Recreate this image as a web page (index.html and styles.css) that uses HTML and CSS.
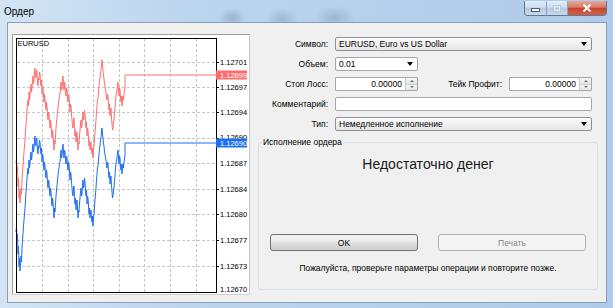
FILE: index.html
```html
<!DOCTYPE html>
<html lang="ru">
<head>
    <meta charset="UTF-8">
    <title>Ордер</title>
    <link rel="stylesheet" href="styles.css">
</head>
<body>
    <div class="window">
        <div class="titlebar">
            <span class="title">Ордер</span>
            <div class="caption-btns">
                <span class="cap cap-min"><i></i></span>
                <span class="cap cap-max"><i></i></span>
                <span class="cap cap-close">
                    <svg width="10" height="8" viewBox="0 0 10 8"><path d="M1.5 0.5 L8.5 7.5 M8.5 0.5 L1.5 7.5" stroke="#fff" stroke-width="2"/></svg>
                </span>
            </div>
        </div>

        <div class="client">
            <div class="chart">
                <svg width="236" height="259" viewBox="0 0 236 259">
                    <g class="grid">
                        <line x1="29.5" y1="4" x2="29.5" y2="257"/>
                        <line x1="55.5" y1="4" x2="55.5" y2="257"/>
                        <line x1="80.5" y1="4" x2="80.5" y2="257"/>
                        <line x1="106.5" y1="4" x2="106.5" y2="257"/>
                        <line x1="131.5" y1="4" x2="131.5" y2="257"/>
                        <line x1="157.5" y1="4" x2="157.5" y2="257"/>
                        <line x1="183.5" y1="4" x2="183.5" y2="257"/>
                        <line x1="4" y1="27.5" x2="203" y2="27.5"/>
                        <line x1="4" y1="52.5" x2="203" y2="52.5"/>
                        <line x1="4" y1="77.5" x2="203" y2="77.5"/>
                        <line x1="4" y1="103.5" x2="203" y2="103.5"/>
                        <line x1="4" y1="128.5" x2="203" y2="128.5"/>
                        <line x1="4" y1="154.5" x2="203" y2="154.5"/>
                        <line x1="4" y1="179.5" x2="203" y2="179.5"/>
                        <line x1="4" y1="205.5" x2="203" y2="205.5"/>
                        <line x1="4" y1="231.5" x2="203" y2="231.5"/>
                    </g>

                    <!-- ask (red) and bid (blue) tick lines, points in window coords -->
                    <g transform="translate(-13,-35)">
                        <polyline class="ask" points="16,164 16.5,158 17,172 17.5,166 18,186 18.5,178 19,198 19.5,190 20,203 20.5,196 21,188 21.5,194 22,180 22.5,172 23,166 23.5,158 24,152 24.5,146 25,140 25.5,132 26,124 26.5,118 27,110 27.5,104 28,100 28.5,106 29,92 29.5,100 30,96 30.5,88 31,84 31.5,92 32,88 32.5,80 33,76 33.5,84 34,80 34.5,72 35,68 35.5,76 36,78 36.5,70 37,72 37.5,82 38,86 38.5,78 39,80 39.5,72 40,74 40.5,82 41,86 41.5,80 42,94 42.5,86 43,88 43.5,96 44,102 44.5,94 45,98 45.5,106 46,110 46.5,102 47,106 47.5,114 48,120 48.5,112 49,114 49.5,122 50,128 50.5,120 51,124 51.5,132 52,138 52.5,130 53,134 53.5,142 54,150 54.5,140 55,144 55.5,136 56,128 56.5,122 57,118 57.5,112 58,108 58.5,102 59,100 59.5,96 60,94 60.5,88 61,82 61.5,90 62,88 62.5,80 63,76 63.5,84 64,90 64.5,82 65,84 65.5,92 66,96 66.5,88 67,90 67.5,98 68,102 68.5,94 69,96 69.5,104 70,112 70.5,104 71,106 71.5,114 72,120 72.5,126 73,128 73.5,120 74,118 74.5,128 75,136 75.5,130 76,142 76.5,136 77,132 77.5,140 78,150 78.5,142 79,144 79.5,136 80,130 80.5,124 81,120 81.5,128 82,126 82.5,118 83,112 83.5,120 84,118 84.5,110 85,114 85.5,122 86,128 86.5,122 87,136 87.5,128 88,130 88.5,138 89,146 89.5,140 90,150 90.5,144 91,142 91.5,150 92,154 92.5,148 93,158 93.5,150 94,146 94.5,138 95,132 95.5,126 96,120 96.5,112 97,106 97.5,100 98,98 98.5,92 99,86 99.5,80 100,78 100.5,72 101,70 101.5,64 102,60 102.5,66 103,70 103.5,76 104,78 104.5,84 105,86 105.5,90 106,92 106.5,98 107,100 107.5,94 108,96 108.5,104 109,110 109.5,104 110,116 110.5,110 111,108 111.5,118 112,124 112.5,130 113,128 113.5,122 114,120 114.5,112 115,108 115.5,100 116,96 116.5,92 117,90 117.5,84 118,82 118.5,90 119,96 119.5,88 120,90 120.5,98 121,102 121.5,96 122,106 122.5,100 123,96 123.5,100 124,94 124.5,90 125,88 125,75 216,75"/>
                    </g>
                    <g transform="translate(-13,33)">
                        <polyline class="bid" points="16,164 16.5,158 17,172 17.5,166 18,186 18.5,178 19,198 19.5,190 20,203 20.5,196 21,188 21.5,194 22,180 22.5,172 23,166 23.5,158 24,152 24.5,146 25,140 25.5,132 26,124 26.5,118 27,110 27.5,104 28,100 28.5,106 29,92 29.5,100 30,96 30.5,88 31,84 31.5,92 32,88 32.5,80 33,76 33.5,84 34,80 34.5,72 35,68 35.5,76 36,78 36.5,70 37,72 37.5,82 38,86 38.5,78 39,80 39.5,72 40,74 40.5,82 41,86 41.5,80 42,94 42.5,86 43,88 43.5,96 44,102 44.5,94 45,98 45.5,106 46,110 46.5,102 47,106 47.5,114 48,120 48.5,112 49,114 49.5,122 50,128 50.5,120 51,124 51.5,132 52,138 52.5,130 53,134 53.5,142 54,150 54.5,140 55,144 55.5,136 56,128 56.5,122 57,118 57.5,112 58,108 58.5,102 59,100 59.5,96 60,94 60.5,88 61,82 61.5,90 62,88 62.5,80 63,76 63.5,84 64,90 64.5,82 65,84 65.5,92 66,96 66.5,88 67,90 67.5,98 68,102 68.5,94 69,96 69.5,104 70,112 70.5,104 71,106 71.5,114 72,120 72.5,126 73,128 73.5,120 74,118 74.5,128 75,136 75.5,130 76,142 76.5,136 77,132 77.5,140 78,150 78.5,142 79,144 79.5,136 80,130 80.5,124 81,120 81.5,128 82,126 82.5,118 83,112 83.5,120 84,118 84.5,110 85,114 85.5,122 86,128 86.5,122 87,136 87.5,128 88,130 88.5,138 89,146 89.5,140 90,150 90.5,144 91,142 91.5,150 92,154 92.5,148 93,158 93.5,150 94,146 94.5,138 95,132 95.5,126 96,120 96.5,112 97,106 97.5,100 98,98 98.5,92 99,86 99.5,80 100,78 100.5,72 101,70 101.5,64 102,60 102.5,66 103,70 103.5,76 104,78 104.5,84 105,86 105.5,90 106,92 106.5,98 107,100 107.5,94 108,96 108.5,104 109,110 109.5,104 110,116 110.5,110 111,108 111.5,118 112,124 112.5,130 113,128 113.5,122 114,120 114.5,112 115,108 115.5,100 116,96 116.5,92 117,90 117.5,84 118,82 118.5,90 119,96 119.5,88 120,90 120.5,98 121,102 121.5,96 122,106 122.5,100 123,96 123.5,100 124,94 124.5,90 125,88 125,75 216,75"/>
                    </g>

                    <rect class="plot" x="3.5" y="3.5" width="200" height="254"/>

                    <g class="ticks">
                        <line x1="203" y1="27.5" x2="206" y2="27.5"/>
                        <line x1="203" y1="52.5" x2="206" y2="52.5"/>
                        <line x1="203" y1="77.5" x2="206" y2="77.5"/>
                        <line x1="203" y1="103.5" x2="206" y2="103.5"/>
                        <line x1="203" y1="154.5" x2="206" y2="154.5"/>
                        <line x1="203" y1="179.5" x2="206" y2="179.5"/>
                        <line x1="203" y1="205.5" x2="206" y2="205.5"/>
                        <line x1="203" y1="231.5" x2="206" y2="231.5"/>
                    </g>

                    <g class="prices">
                        <text x="207" y="30">1.12701</text>
                        <text x="207" y="55">1.12697</text>
                        <text x="207" y="80">1.12694</text>
                        <text x="207" y="105">1.12690</text>
                        <text x="207" y="131">1.12687</text>
                        <text x="207" y="157">1.12684</text>
                        <text x="207" y="182">1.12680</text>
                        <text x="207" y="208">1.12677</text>
                        <text x="207" y="234">1.12673</text>
                        <text x="207" y="257">1.12670</text>
                    </g>

                    <rect class="ask-box" x="203" y="35.5" width="31" height="9"/>
                    <text class="box-text" x="207" y="43">1.12699</text>
                    <rect class="bid-box" x="203" y="103.5" width="31" height="9"/>
                    <text class="box-text" x="207" y="111">1.12690</text>

                    <text class="symbol" x="4.5" y="11">EURUSD</text>
                </svg>
            </div>

            <div class="form">
                <div class="row">
                    <span class="label">Символ:</span>
                    <div class="combo list wide">EURUSD, Euro vs US Dollar<span class="arrow"></span></div>
                </div>
                <div class="row">
                    <span class="label">Объем:</span>
                    <div class="combo short">0.01<span class="arrow"></span></div>
                </div>
                <div class="row">
                    <span class="label">Стоп Лосс:</span>
                    <div class="spin">
                        <span class="value">0.00000</span>
                        <span class="spin-btns"><i class="up"></i><i class="down"></i></span>
                    </div>
                    <span class="label label-tp">Тейк Профит:</span>
                    <div class="spin">
                        <span class="value">0.00000</span>
                        <span class="spin-btns"><i class="up"></i><i class="down"></i></span>
                    </div>
                </div>
                <div class="row">
                    <span class="label">Комментарий:</span>
                    <div class="edit wide"></div>
                </div>
                <div class="row">
                    <span class="label">Тип:</span>
                    <div class="combo list wide">Немедленное исполнение<span class="arrow"></span></div>
                </div>

                <fieldset class="group">
                    <legend>Исполнение ордера</legend>
                    <div class="status">Недостаточно денег</div>
                    <div class="buttons">
                        <button class="btn">OK</button>
                        <button class="btn" disabled>Печать</button>
                    </div>
                    <p class="note">Пожалуйста, проверьте параметры операции и повторите позже.</p>
                </fieldset>
            </div>
        </div>
    </div>
</body>
</html>
```

FILE: styles.css
```css
* {
    box-sizing: border-box;
}
body {
    margin: 0;
    width: 613px;
    height: 308px;
    overflow: hidden;
    font-family: "Liberation Sans", Arial, sans-serif;
    background: #a9c8e6;
}
.window {
    height: 308px;
    display: flex;
    flex-direction: column;
    background:
        radial-gradient(ellipse 14px 10px at 232px 18px, rgba(70, 100, 140, 0.3), transparent),
        radial-gradient(ellipse 16px 12px at 282px 20px, rgba(70, 100, 140, 0.25), transparent),
        radial-gradient(ellipse 20px 12px at 335px 18px, rgba(70, 100, 140, 0.25), transparent),
        linear-gradient(90deg, #d3e5f5 0%, #bcd5ee 30%, #aecbea 100%);
}
.titlebar {
    height: 22px;
    display: flex;
    justify-content: space-between;
    align-items: flex-start;
    padding: 0 6px 0 4px;
}
.title {
    font-size: 10px;
    line-height: 23px;
    color: #000;
}
.caption-btns {
    display: flex;
    margin-top: 1px;
    border: 1px solid #5f7893;
    border-top: none;
    border-radius: 0 0 4px 4px;
    overflow: hidden;
}
.cap {
    height: 14px;
    display: flex;
    align-items: center;
    justify-content: center;
    background: linear-gradient(180deg, #e2ecf6 0%, #cfdeee 45%, #b4c9e0 50%, #c6d8ec 100%);
    border-right: 1px solid #8aa3bf;
}
.cap-min {
    width: 22px;
}
.cap-min i {
    width: 9px;
    height: 4px;
    margin-top: 4px;
    background: #fff;
    border: 1px solid #4a5f78;
}
.cap-max {
    width: 21px;
}
.cap-max i {
    width: 8px;
    height: 7px;
    border: 1px solid #b8c7d8;
    box-shadow: inset 0 0 0 1px #e8eef5;
}
.cap-close {
    width: 38px;
    border-right: none;
    background: linear-gradient(180deg, #e7a99b 0%, #d77a67 45%, #c3452c 50%, #d3604a 100%);
}
.client {
    flex: 1;
    margin: 0 6px 5px 7px;
    border: 1px solid #8b9fb5;
    background: #f0f0f0;
    display: flex;
    align-items: flex-start;
    padding: 11px 0 0 4px;
}
.chart {
    width: 238px;
    height: 261px;
    border: 1px solid #a0a0a0;
    border-bottom-color: #d0d0d0;
    border-right-color: #c8c8c8;
    background: #fff;
}
.chart svg {
    display: block;
}
.grid line {
    stroke: #c6c6c6;
    stroke-width: 1;
    stroke-dasharray: 3 2;
}
.plot {
    fill: none;
    stroke: #000;
    stroke-width: 1;
}
.ticks line {
    stroke: #000;
    stroke-width: 1;
}
.ask {
    fill: none;
    stroke: #ff6f6f;
    stroke-width: 1;
}
.bid {
    fill: none;
    stroke: #1f6cf5;
    stroke-width: 1;
}
.prices text,
.box-text,
.symbol {
    font-family: "Liberation Sans", Arial, sans-serif;
    font-size: 7.5px;
    fill: #000;
}
.box-text {
    fill: #fff;
}
.ask-box {
    fill: #ff6b6b;
}
.bid-box {
    fill: #1a6ff2;
}
.form {
    width: 340px;
    margin-left: 8px;
    padding-top: 3px;
    font-size: 8.5px;
    color: #000;
}
.row {
    display: flex;
    align-items: center;
    height: 14px;
    margin-bottom: 6px;
}
.label {
    width: 70px;
    margin-right: 7px;
    text-align: right;
    line-height: 14px;
    white-space: nowrap;
}
.label-tp {
    width: 84px;
}
.combo,
.edit,
.spin {
    height: 14px;
    border: 1px solid #a3a7ad;
    border-radius: 2px;
    background: #fff;
    line-height: 12px;
}
.combo {
    display: flex;
    justify-content: space-between;
    align-items: center;
    padding: 0 4px 0 3px;
}
.combo.list {
    background: linear-gradient(180deg, #fbfbfb 0%, #f1f1f1 50%, #e6e6e6 100%);
    border-color: #8f9297;
}
.wide {
    width: 257px;
}
.short {
    width: 83px;
}
.arrow {
    width: 0;
    height: 0;
    border-left: 3px solid transparent;
    border-right: 3px solid transparent;
    border-top: 4px solid #000;
}
.spin {
    width: 83px;
    display: flex;
    border-radius: 1px;
}
.spin .value {
    flex: 1;
    text-align: right;
    padding-right: 3px;
}
.spin-btns {
    width: 12px;
    display: flex;
    flex-direction: column;
    border-left: 1px solid #c9ccd1;
}
.spin-btns i {
    flex: 1;
    display: flex;
    align-items: center;
    justify-content: center;
    background: linear-gradient(180deg, #f7f7f7, #e4e4e4);
}
.spin-btns i.up {
    border-bottom: 1px solid #c9ccd1;
}
.spin-btns i::after {
    content: "";
    border-left: 2px solid transparent;
    border-right: 2px solid transparent;
}
.spin-btns i.up::after {
    border-bottom: 2px solid #6f6f6f;
}
.spin-btns i.down::after {
    border-top: 2px solid #6f6f6f;
}
.group {
    margin: 4px 0 0;
    height: 153px;
    padding: 0 11px;
    border: 1px solid #d5dfe5;
    border-radius: 3px;
    min-width: 0;
}
.group legend {
    margin-left: -8px;
    padding: 0 1px;
    font-size: 8.5px;
    line-height: 10px;
}
.status {
    margin-top: 9px;
    font-size: 14px;
    line-height: 16px;
    text-align: center;
    color: #1a1a1a;
}
.buttons {
    display: flex;
    gap: 20px;
    margin-top: 62px;
}
.btn {
    width: 148px;
    height: 17px;
    padding: 0;
    font-family: "Liberation Sans", Arial, sans-serif;
    font-size: 8.5px;
    color: #000;
    border: 1px solid #707070;
    border-radius: 3px;
    background: linear-gradient(180deg, #f2f2f2 0%, #ebebeb 48%, #dddddd 52%, #cfcfcf 100%);
}
.btn:disabled {
    color: #8a8a8a;
    border-color: #adb2b5;
    background: #f4f4f4;
}
.note {
    margin: 11px 0 0;
    line-height: 12px;
    text-align: center;
}
```
